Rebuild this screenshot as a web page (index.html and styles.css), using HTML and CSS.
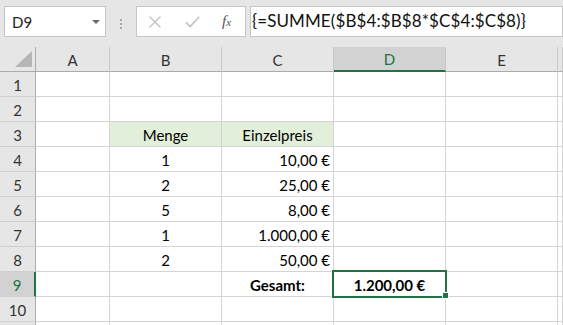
FILE: index.html
```html
<!DOCTYPE html>
<html lang="de">
<head>
  <meta charset="UTF-8" />
  <title>Mappe1 - Excel</title>
  <link rel="stylesheet" href="styles.css">
</head>
<body>

  <!-- Bearbeitungsleiste -->
  <div class="toolbar">
    <div class="namebox">
      <span>D9</span>
      <svg class="caret" width="8" height="5" viewBox="0 0 8 5"><polygon points="0,0 8,0 4,4" fill="#6b6b6b"/></svg>
    </div>
    <div class="grip"><i></i><i></i><i></i></div>
    <div class="fxbox">
      <svg class="btn" width="14" height="12" viewBox="0 0 14 12">
        <path d="M1.5 0.5 L12.5 11.5 M12.5 0.5 L1.5 11.5" stroke="#c2c2c2" stroke-width="1.4" fill="none"/>
      </svg>
      <svg class="btn" width="15" height="12" viewBox="0 0 15 12">
        <path d="M0.8 6.2 L5.2 10.6 L14.2 0.8" stroke="#c2c2c2" stroke-width="1.6" fill="none"/>
      </svg>
      <span class="fx">f<small>x</small></span>
    </div>
    <div class="formula">{=SUMME($B$4:$B$8*$C$4:$C$8)}</div>
  </div>

  <!-- Tabelle -->
  <div class="sheet">
    <div class="corner">
      <svg width="18" height="17" viewBox="0 0 18 17"><polygon points="17,0 17,16 0,16" fill="#b6b6b6"/></svg>
    </div>
    <div class="colhead">A</div>
    <div class="colhead">B</div>
    <div class="colhead">C</div>
    <div class="colhead active">D</div>
    <div class="colhead">E</div>
    <div class="colhead"></div>

    <div class="rowhead">1</div><div class="cell"></div><div class="cell"></div><div class="cell"></div><div class="cell"></div><div class="cell"></div><div class="cell"></div>
    <div class="rowhead">2</div><div class="cell"></div><div class="cell"></div><div class="cell"></div><div class="cell"></div><div class="cell"></div><div class="cell"></div>
    <div class="rowhead">3</div><div class="cell"></div><div class="cell head center">Menge</div><div class="cell head center">Einzelpreis</div><div class="cell"></div><div class="cell"></div><div class="cell"></div>
    <div class="rowhead">4</div><div class="cell"></div><div class="cell center">1</div><div class="cell right">10,00 €</div><div class="cell"></div><div class="cell"></div><div class="cell"></div>
    <div class="rowhead">5</div><div class="cell"></div><div class="cell center">2</div><div class="cell right">25,00 €</div><div class="cell"></div><div class="cell"></div><div class="cell"></div>
    <div class="rowhead">6</div><div class="cell"></div><div class="cell center">5</div><div class="cell right">8,00 €</div><div class="cell"></div><div class="cell"></div><div class="cell"></div>
    <div class="rowhead">7</div><div class="cell"></div><div class="cell center">1</div><div class="cell right">1.000,00 €</div><div class="cell"></div><div class="cell"></div><div class="cell"></div>
    <div class="rowhead">8</div><div class="cell"></div><div class="cell center">2</div><div class="cell right">50,00 €</div><div class="cell"></div><div class="cell"></div><div class="cell"></div>
    <div class="rowhead active">9</div><div class="cell"></div><div class="cell"></div><div class="cell center bold">Gesamt:</div>
    <div class="cell center bold selected">1.200,00 €<span class="sel-frame"><span class="handle"></span></span></div>
    <div class="cell"></div><div class="cell"></div>
    <div class="rowhead">10</div><div class="cell"></div><div class="cell"></div><div class="cell"></div><div class="cell"></div><div class="cell"></div><div class="cell"></div>
    <!-- angeschnittene Zeile 11 -->
    <div class="rowhead stub"></div><div class="cell stub"></div><div class="cell stub"></div><div class="cell stub"></div><div class="cell stub"></div><div class="cell stub"></div><div class="cell stub"></div>
  </div>

</body>
</html>
```

FILE: styles.css
```css
body {
  margin: 0;
  width: 563px;
  height: 325px;
  overflow: hidden;
  background: #e6e6e6;
  font-family: Lato, "Open Sans", sans-serif;
  color: #000;
}

/* Bearbeitungsleiste */
.toolbar {
  display: flex;
  height: 47px;
  padding: 6px 0 0 4px;
  box-sizing: border-box;
}
.namebox {
  width: 102px;
  height: 31px;
  box-sizing: border-box;
  background: #fff;
  border: 1px solid #c6c6c6;
  display: flex;
  align-items: center;
  justify-content: space-between;
  padding: 0 5px 0 7px;
  font-size: 15px;
  color: #222;
}
.caret {
  margin-top: 1px;
}
.grip {
  width: 30px;
  display: flex;
  flex-direction: column;
  align-items: center;
  justify-content: center;
  gap: 2px;
  padding-bottom: 6px;
}
.grip i {
  width: 2px;
  height: 2px;
  background: #a9a9a9;
}
.fxbox {
  width: 110px;
  height: 31px;
  box-sizing: border-box;
  background: #fff;
  border: 1px solid #c6c6c6;
  display: flex;
  align-items: center;
  padding: 0 0 0 11px;
}
.fxbox .btn {
  margin-right: 23px;
}
.fx {
  font-family: "Liberation Serif", serif;
  font-style: italic;
  font-size: 15px;
  color: #555;
  margin-left: -1px;
}
.fx small {
  font-size: 11px;
}
.formula {
  margin-left: 4px;
  width: 313px;
  height: 31px;
  box-sizing: border-box;
  background: #fff;
  border: 1px solid #c6c6c6;
  padding: 0 0 0 1px;
  font-size: 17px;
  letter-spacing: 0.1px;
  line-height: 28px;
  white-space: nowrap;
  overflow: hidden;
  color: #111;
}

/* Tabelle */
.sheet {
  display: grid;
  grid-template-columns: 36px 74px 112px 112px 112px 112px 1fr;
  grid-template-rows: repeat(11, 25px) 3px;
  font-size: 15px;
}
.sheet > div {
  box-sizing: border-box;
  display: flex;
  align-items: flex-end;
  padding-bottom: 2px;
  white-space: nowrap;
}
.sheet > .stub {
  padding-bottom: 0;
  border-bottom: none;
}
.corner {
  border-right: 1px solid #ababab;
  border-bottom: 1px solid #ababab;
  justify-content: flex-end;
  align-items: flex-end;
  padding: 0 2px 3px 0 !important;
}
.colhead {
  justify-content: center;
  color: #333;
  border-right: 1px solid #c8c8c8;
  border-bottom: 1px solid #ababab;
}
.colhead.active {
  background: #d2d2d2;
  color: #217346;
  border-bottom: 2px solid #217346;
}
.rowhead {
  justify-content: center;
  color: #333;
  border-right: 1px solid #ababab;
  border-bottom: 1px solid #cfcfcf;
}
.rowhead.active {
  background: #d2d2d2;
  color: #217346;
  border-right: 2px solid #217346;
}
.cell {
  background: #fff;
  border-right: 1px solid #d4d4d4;
  border-bottom: 1px solid #d4d4d4;
}
.cell.head {
  background: #e2efda;
}
.center {
  justify-content: center;
}
.right {
  justify-content: flex-end;
  padding-right: 3px;
}
.bold {
  font-weight: bold;
}

/* Auswahlrahmen */
.selected {
  position: relative;
}
.sel-frame {
  position: absolute;
  left: -2px;
  top: -2px;
  width: 115px;
  height: 28px;
  box-sizing: border-box;
  border: 2px solid #217346;
}
.handle {
  position: absolute;
  left: 109px;
  top: 21px;
  width: 5px;
  height: 5px;
  background: #217346;
  outline: 1px solid #fff;
}
```
